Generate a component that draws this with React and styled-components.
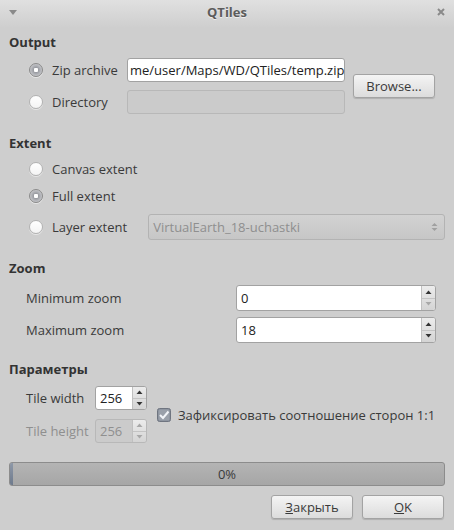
import React from 'react';
import styled, { createGlobalStyle } from 'styled-components';

const GlobalStyle = createGlobalStyle`
  html, body {
    margin: 0;
    padding: 0;
    background: #cecece;
  }
  body {
    font-family: 'Open Sans', 'DejaVu Sans', sans-serif;
    font-size: 13px;
    color: #3a3a3a;
  }
`;

const Window = styled.div`
  width: 454px;
  height: 530px;
  display: flex;
  flex-direction: column;
  background: #cecece;
  overflow: hidden;
`;

const TitleBar = styled.div`
  height: 28px;
  flex: 0 0 28px;
  display: flex;
  align-items: flex-start;
  justify-content: space-between;
  padding: 0 8px;
  box-sizing: border-box;
  background: linear-gradient(#e0e0e0, #cecece);
`;

const TitleText = styled.div`
  font-weight: bold;
  color: #5c5c5c;
  line-height: 24px;
  text-shadow: 0 1px 0 rgba(255, 255, 255, 0.6);
`;

const TitleIcon = styled.div`
  width: 10px;
  height: 24px;
  display: flex;
  align-items: center;
  justify-content: center;
`;

const Body = styled.div`
  flex: 1;
  display: flex;
  flex-direction: column;
  padding: 4px 9px 0 9px;
`;

const Header = styled.div`
  height: 20px;
  line-height: 20px;
  font-weight: bold;
  color: #333;
  margin-top: ${p => p.top || 0}px;
`;

const OutputGrid = styled.div`
  display: grid;
  grid-template-columns: 110px 218px 82px;
  grid-template-rows: 24px 24px;
  column-gap: 8px;
  row-gap: 8px;
  margin-top: 6px;
  align-items: center;
`;

const Option = styled.label`
  display: flex;
  align-items: center;
  height: ${p => p.h || 24}px;
  padding-left: ${p => p.indent || 20}px;
  margin-top: ${p => p.top || 0}px;
  gap: 9px;
  white-space: nowrap;
  color: ${p => (p.disabled ? '#8f8f8f' : '#3a3a3a')};
`;

const Radio = styled.span`
  width: 14px;
  height: 14px;
  flex: 0 0 14px;
  box-sizing: border-box;
  border-radius: 50%;
  border: 1px solid ${p => (p.checked ? '#8a8a8a' : '#b3b3b3')};
  background: ${p =>
    p.checked
      ? 'radial-gradient(circle, #ffffff 0 2px, #9a9ca2 2.5px, #c4c5c9 6px)'
      : 'linear-gradient(#ffffff, #f4f4f4)'};
  box-shadow: 0 1px 0 rgba(255, 255, 255, 0.5);
`;

const TextInput = styled.div`
  height: 24px;
  box-sizing: border-box;
  border: 1px solid ${p => (p.disabled ? '#b8b8b8' : '#a2a2a2')};
  border-radius: 3px;
  background: ${p => (p.disabled ? '#cbcbcb' : '#ffffff')};
  color: #222;
  padding: 0 2px;
  line-height: 22px;
  white-space: nowrap;
  font-size: 13px;
`;

const Button = styled.div`
  width: ${p => p.w || 82}px;
  height: 24px;
  box-sizing: border-box;
  border: 1px solid #a3a3a3;
  border-radius: 3px;
  background: linear-gradient(#f4f4f4, #dcdcdc);
  box-shadow: 0 1px 1px rgba(0, 0, 0, 0.15);
  display: flex;
  align-items: center;
  justify-content: center;
  color: #3a3a3a;
  u {
    text-decoration: underline;
  }
`;

const BrowseCell = styled.div`
  grid-column: 3;
  grid-row: 1 / span 2;
  align-self: center;
`;

const Combo = styled.div`
  flex: 1;
  height: 26px;
  box-sizing: border-box;
  border: 1px solid #b3b3b3;
  border-radius: 3px;
  background: linear-gradient(#d2d2d2, #c6c6c6);
  display: flex;
  align-items: center;
  justify-content: space-between;
  padding: 0 6px 0 4px;
  color: #8f8f8f;
  margin-left: 12px;
`;

const FieldRow = styled.div`
  display: flex;
  align-items: center;
  height: 26px;
  margin-top: ${p => p.top || 0}px;
  padding-left: 17px;
`;

const FieldLabel = styled.div`
  width: ${p => p.w || 210}px;
  flex: 0 0 ${p => p.w || 210}px;
  color: ${p => (p.disabled ? '#8f8f8f' : '#3a3a3a')};
  white-space: nowrap;
`;

const Spin = styled.div`
  width: ${p => p.w || 200}px;
  height: ${p => p.h || 26}px;
  box-sizing: border-box;
  border: 1px solid ${p => (p.disabled ? '#b8b8b8' : '#a2a2a2')};
  border-radius: 3px;
  background: ${p => (p.disabled ? '#cbcbcb' : '#ffffff')};
  display: flex;
  overflow: hidden;
`;

const SpinValue = styled.div`
  flex: 1;
  padding-left: 4px;
  display: flex;
  align-items: center;
  color: ${p => (p.disabled ? '#8f8f8f' : '#222')};
`;

const SpinArrows = styled.div`
  width: 13px;
  display: flex;
  flex-direction: column;
  border-left: 1px solid #c0c0c0;
  background: linear-gradient(#ececec, #d4d4d4);
`;

const SpinArrow = styled.div`
  flex: 1;
  display: flex;
  align-items: center;
  justify-content: center;
  & + & {
    border-top: 1px solid #c4c4c4;
  }
`;

const ParamsArea = styled.div`
  display: flex;
  align-items: center;
  margin-top: 7px;
`;

const ParamsFields = styled.div`
  display: flex;
  flex-direction: column;
  gap: 9px;
`;

const ParamRow = styled.div`
  display: flex;
  align-items: center;
  height: 24px;
  padding-left: 17px;
`;

const CheckOption = styled.div`
  display: flex;
  align-items: center;
  gap: 7px;
  margin-left: 10px;
  white-space: nowrap;
  color: #3a3a3a;
`;

const Progress = styled.div`
  height: 24px;
  margin-top: 19px;
  box-sizing: border-box;
  border: 1px solid #8c8c8c;
  border-radius: 3px;
  background: linear-gradient(#b4b4b4, #a6a6a6);
  position: relative;
  display: flex;
  align-items: center;
  justify-content: center;
  color: #3a3a3a;
`;

const ProgressChunk = styled.div`
  position: absolute;
  left: 0;
  top: 0;
  bottom: 0;
  width: 3px;
  border-radius: 2px 0 0 2px;
  background: linear-gradient(#8e98a8, #6e7a8c);
`;

const ButtonRow = styled.div`
  display: flex;
  justify-content: flex-end;
  gap: 9px;
  margin-top: 9px;
  padding-right: 1px;
`;

const Arrow = ({ up, color }) => (
  <svg width="7" height="4" viewBox="0 0 7 4">
    {up ? (
      <polygon points="0.5,4 3.5,0.5 6.5,4" fill={color} />
    ) : (
      <polygon points="0.5,0 3.5,3.5 6.5,0" fill={color} />
    )}
  </svg>
);

const SpinBox = ({ value, w, h, disabled, upOff, downOff }) => (
  <Spin w={w} h={h} disabled={disabled}>
    <SpinValue disabled={disabled}>{value}</SpinValue>
    <SpinArrows>
      <SpinArrow>
        <Arrow up color={disabled || upOff ? '#a8a8a8' : '#333'} />
      </SpinArrow>
      <SpinArrow>
        <Arrow color={disabled || downOff ? '#a8a8a8' : '#333'} />
      </SpinArrow>
    </SpinArrows>
  </Spin>
);

const CheckBox = () => (
  <svg width="14" height="14" viewBox="0 0 14 14">
    <rect x="0.5" y="0.5" width="13" height="13" rx="2" fill="#858c98" stroke="#6f7580" />
    <rect x="1.5" y="1.5" width="11" height="11" rx="1.5" fill="#9aa0aa" />
    <polyline points="3,7 6,10 11.5,3.5" fill="none" stroke="#f2f4f8" strokeWidth="2" />
  </svg>
);

const App = () => {
  return (
    <Window>
      <GlobalStyle />
      <TitleBar>
        <TitleIcon>
          <svg width="8" height="5" viewBox="0 0 8 5">
            <polygon points="0,0 8,0 4,5" fill="#8a8a8a" />
          </svg>
        </TitleIcon>
        <TitleText>QTiles</TitleText>
        <TitleIcon>
          <svg width="8" height="8" viewBox="0 0 8 8">
            <path d="M1 1 L7 7 M7 1 L1 7" stroke="#8a8a8a" strokeWidth="2" />
          </svg>
        </TitleIcon>
      </TitleBar>
      <Body>
        <Header>Output</Header>
        <OutputGrid>
          <Option>
            <Radio checked />
            Zip archive
          </Option>
          <TextInput>me/user/Maps/WD/QTiles/temp.zip</TextInput>
          <BrowseCell>
            <Button>Browse...</Button>
          </BrowseCell>
          <Option>
            <Radio />
            Directory
          </Option>
          <TextInput disabled />
        </OutputGrid>

        <Header top={19}>Extent</Header>
        <Option top={4}>
          <Radio />
          Canvas extent
        </Option>
        <Option top={3}>
          <Radio checked />
          Full extent
        </Option>
        <Option h={28} top={5}>
          <Radio />
          Layer extent
          <Combo>
            <span>VirtualEarth_18-uchastki</span>
            <svg width="7" height="10" viewBox="0 0 7 10">
              <polygon points="0.5,4 3.5,1 6.5,4" fill="#a0a0a0" />
              <polygon points="0.5,6 3.5,9 6.5,6" fill="#a0a0a0" />
            </svg>
          </Combo>
        </Option>

        <Header top={17}>Zoom</Header>
        <FieldRow top={7}>
          <FieldLabel>Minimum zoom</FieldLabel>
          <SpinBox value="0" w={200} downOff />
        </FieldRow>
        <FieldRow top={6}>
          <FieldLabel>Maximum zoom</FieldLabel>
          <SpinBox value="18" w={200} />
        </FieldRow>

        <Header top={16}>Параметры</Header>
        <ParamsArea>
          <ParamsFields>
            <ParamRow>
              <FieldLabel w={69}>Tile width</FieldLabel>
              <SpinBox value="256" w={52} h={24} />
            </ParamRow>
            <ParamRow>
              <FieldLabel w={69} disabled>Tile height</FieldLabel>
              <SpinBox value="256" w={52} h={24} disabled />
            </ParamRow>
          </ParamsFields>
          <CheckOption>
            <CheckBox />
            Зафиксировать соотношение сторон 1:1
          </CheckOption>
        </ParamsArea>

        <Progress>
          <ProgressChunk />
          0%
        </Progress>
        <ButtonRow>
          <Button>
            <u>З</u>акрыть
          </Button>
          <Button>
            <u>O</u>K
          </Button>
        </ButtonRow>
      </Body>
    </Window>
  );
};

export default App;
